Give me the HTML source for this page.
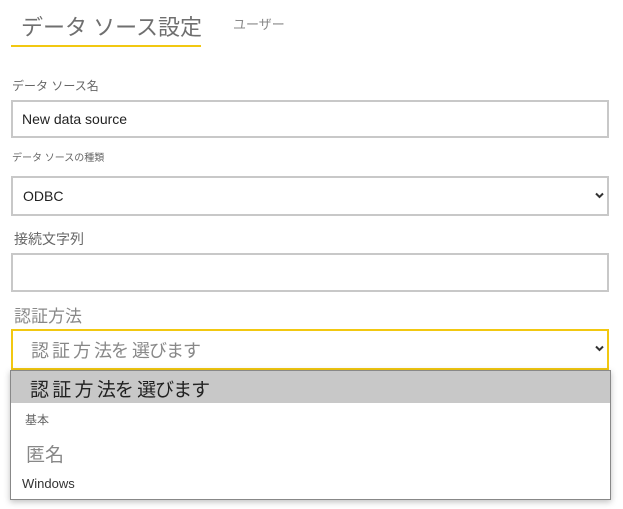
<!DOCTYPE html><html><head><style>
body{margin:0;width:623px;height:509px;background:#fff;font-family:"Liberation Sans","Noto Sans CJK JP",sans-serif;position:relative;overflow:hidden;color:#333}
.a{position:absolute;white-space:nowrap;line-height:1}
.box{position:absolute;left:11px;width:594px;border:2px solid #c8c8c8;background:#fff}
</style></head><body>
<div class="a" style="left:21px;top:17px;font-size:22px;color:#6f6f6f">データ ソース設定</div>
<div style="position:absolute;left:11px;top:45px;width:190px;height:2px;background:#f2c811"></div>
<div class="a" style="left:233px;top:18px;font-size:13px;color:#888">ユーザー</div>
<div class="a" style="left:12px;top:80px;font-size:12px;color:#666">データ ソース名</div>
<div class="box" style="top:100px;height:34px"></div>
<div class="a" style="left:22px;top:112px;font-size:14px;color:#222">New data source</div>
<div class="a" style="left:12px;top:154px;font-size:10px;color:#666">データ ソースの種類</div>
<div class="box" style="top:176px;height:36px"></div>
<div class="a" style="left:23px;top:189px;font-size:14px;color:#222">ODBC</div>
<svg style="position:absolute;left:595px;top:192px" width="9" height="7"><path d="M1 1.5L4.5 5L8 1.5" stroke="#333" stroke-width="2" fill="none"/></svg>
<div class="a" style="left:14px;top:232px;font-size:14px;color:#666">接続文字列</div>
<div class="box" style="top:253px;height:35px"></div>
<div class="a" style="left:14px;top:308px;font-size:17px;color:#888">認証方法</div>
<div class="box" style="top:329px;height:37px;border-color:#f2c811"></div>
<div class="a" style="left:31px;top:342px;font-size:18px;color:#888;letter-spacing:-1px">認 証 方 法を 選びます</div>
<svg style="position:absolute;left:595px;top:345px" width="9" height="7"><path d="M1 1.5L4.5 5L8 1.5" stroke="#333" stroke-width="2" fill="none"/></svg>
<div style="position:absolute;left:10px;top:370px;width:599px;height:128px;border:1px solid #888;background:#fff;box-shadow:0 2px 6px rgba(0,0,0,.25)"></div>
<div style="position:absolute;left:11px;top:371px;width:599px;height:32px;background:#c8c8c8"></div>
<div class="a" style="left:30px;top:381px;font-size:19px;color:#222;letter-spacing:-1px">認 証 方 法を 選びます</div>
<div class="a" style="left:25px;top:414px;font-size:12px;color:#666">基本</div>
<div class="a" style="left:26px;top:446px;font-size:19px;color:#888">匿名</div>
<div class="a" style="left:22px;top:477px;font-size:13px;color:#333">Windows</div>
</body></html>
